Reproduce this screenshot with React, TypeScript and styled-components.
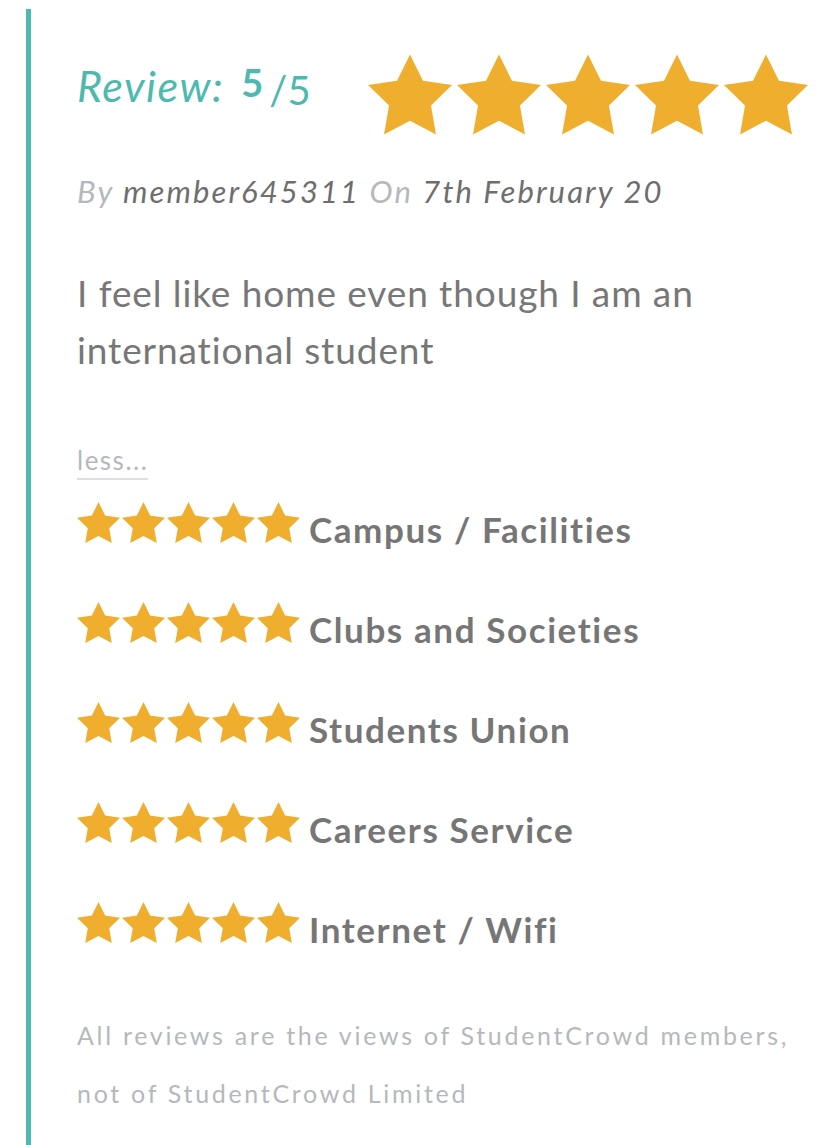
import React from "react";
import styled, { createGlobalStyle } from "styled-components";

const GlobalStyle = createGlobalStyle`
  html, body {
    margin: 0;
    padding: 0;
    background: #ffffff;
    font-family: Lato, "Liberation Sans", sans-serif;
    font-variant-ligatures: none;
  }
`;

const Page = styled.div`
  width: 832px;
  height: 1145px;
  overflow: hidden;
  background: #fff;
  padding: 9px 0 0 26px;
  box-sizing: border-box;
`;

const Card = styled.div`
  border-left: 5px solid #4db9af;
  padding: 45px 0 0 46px;
  min-height: 1136px;
  box-sizing: border-box;
`;

const Header = styled.div`
  display: flex;
  align-items: flex-start;
  gap: 57px;
`;

const Title = styled.div`
  margin-top: 10px;
  font-size: 43px;
  line-height: 1;
  letter-spacing: 1.5px;
  color: #4db9af;
  font-style: italic;
  white-space: nowrap;
`;

const Score = styled.span`
  font-style: normal;
  font-weight: 700;
  font-size: 38px;
  letter-spacing: 0;
  margin-left: 17px;
  position: relative;
  top: -5px;
`;

const OutOf = styled.span`
  font-style: normal;
  font-size: 40px;
  letter-spacing: 0;
  margin-left: 6px;
  position: relative;
  top: 3px;
`;

const StarRow = styled.div<{ $gap: number }>`
  display: flex;
  gap: ${({ $gap }) => $gap}px;
`;

const Byline = styled.div`
  margin-top: 41px;
  font-size: 31px;
  line-height: 1;
  letter-spacing: 2.1px;
  font-style: italic;
  color: #b5b8bc;
  white-space: nowrap;
`;

const Strong = styled.span`
  color: #6e6e6e;
`;

const Body = styled.p`
  margin: 57px 0 0;
  font-size: 37px;
  line-height: 57px;
  letter-spacing: 0.9px;
  color: #777777;
  max-width: 680px;
`;

const LessLink = styled.a`
  display: inline-block;
  margin-top: 69px;
  font-size: 26px;
  line-height: 1;
  letter-spacing: 1.5px;
  color: #b5b8bc;
  padding-bottom: 5px;
  border-bottom: 2px solid #dedfe1;
  text-decoration: none;
`;

const Ratings = styled.div`
  margin-top: 22px;
  display: flex;
  flex-direction: column;
  gap: 55px;
`;

const RatingRow = styled.div`
  display: flex;
  align-items: baseline;
  gap: 9px;
`;

const RatingLabel = styled.span`
  font-size: 35px;
  line-height: 1;
  letter-spacing: 1.6px;
  font-weight: 700;
  color: #767676;
`;

const Disclaimer = styled.p`
  margin: 59px 0 0;
  font-size: 25px;
  line-height: 58px;
  letter-spacing: 2.7px;
  color: #b5b8bc;
  max-width: 740px;
`;

const Star = ({ w, h }: { w: number; h: number }) => (
  <svg width={w} height={h} viewBox="2 2 20 19.02" style={{ display: "block" }}>
    <polygon
      fill="#f0ae2e"
      points="12,2 15.09,8.26 22,9.27 17,14.14 18.18,21.02 12,17.77 5.82,21.02 7,14.14 2,9.27 8.91,8.26"
    />
  </svg>
);

const Stars = ({ w, h, gap }: { w: number; h: number; gap: number }) => (
  <StarRow $gap={gap}>
    {[0, 1, 2, 3, 4].map((i) => (
      <Star key={i} w={w} h={h} />
    ))}
  </StarRow>
);

const categories = [
  "Campus / Facilities",
  "Clubs and Societies",
  "Students Union",
  "Careers Service",
  "Internet / Wifi",
];

export default function App() {
  return (
    <Page>
      <GlobalStyle />
      <Card>
        <Header>
          <Title>
            Review:<Score>5</Score>
            <OutOf>/5</OutOf>
          </Title>
          <Stars w={84} h={81} gap={5} />
        </Header>
        <Byline>
          By <Strong>member645311</Strong> On <Strong>7th February 20</Strong>
        </Byline>
        <Body>I feel like home even though I am an international student</Body>
        <LessLink href="#">less...</LessLink>
        <Ratings>
          {categories.map((c) => (
            <RatingRow key={c}>
              <Stars w={43} h={41} gap={2} />
              <RatingLabel>{c}</RatingLabel>
            </RatingRow>
          ))}
        </Ratings>
        <Disclaimer>
          All reviews are the views of StudentCrowd members, not of StudentCrowd Limited
        </Disclaimer>
      </Card>
    </Page>
  );
}
